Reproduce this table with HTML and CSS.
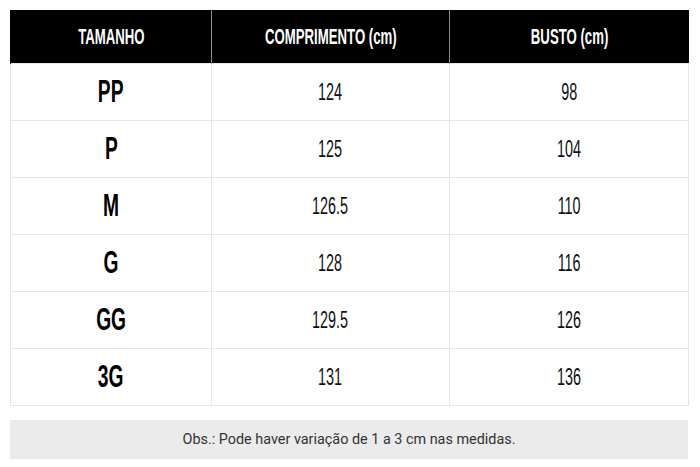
FILE: index.html
```html
<!DOCTYPE html>
<html lang="pt-BR">
<head>
<meta charset="utf-8">
<title>Tabela de medidas</title>
<link rel="stylesheet" href="styles.css">
</head>
<body>
<div class="page">
  <table class="sizes">
    <colgroup>
      <col class="c-size">
      <col class="c-len">
      <col class="c-bust">
    </colgroup>
    <thead>
      <tr>
        <th><span class="cond">TAMANHO</span></th>
        <th><span class="cond">COMPRIMENTO (cm)</span></th>
        <th><span class="cond">BUSTO (cm)</span></th>
      </tr>
    </thead>
    <tbody>
      <tr><td class="size"><span class="cond">PP</span></td><td><span class="cond">124</span></td><td><span class="cond">98</span></td></tr>
      <tr><td class="size"><span class="cond">P</span></td><td><span class="cond">125</span></td><td><span class="cond">104</span></td></tr>
      <tr><td class="size"><span class="cond">M</span></td><td><span class="cond">126.5</span></td><td><span class="cond">110</span></td></tr>
      <tr><td class="size"><span class="cond">G</span></td><td><span class="cond">128</span></td><td><span class="cond">116</span></td></tr>
      <tr><td class="size"><span class="cond">GG</span></td><td><span class="cond">129.5</span></td><td><span class="cond">126</span></td></tr>
      <tr><td class="size"><span class="cond">3G</span></td><td><span class="cond">131</span></td><td><span class="cond">136</span></td></tr>
    </tbody>
  </table>
  <p class="note">Obs.: Pode haver variação de 1 a 3 cm nas medidas.</p>
</div>
</body>
</html>
```

FILE: styles.css
```css
html, body {
  margin: 0;
  padding: 0;
  background: #ffffff;
}

.page {
  padding: 10px 12px 0 10px;
  display: flex;
  flex-direction: column;
  gap: 14px;
}

.sizes {
  width: 678px;
  border-collapse: collapse;
  table-layout: fixed;
  font-family: "Liberation Sans", Arial, sans-serif;
  color: #111;
}

.c-size { width: 201px; }
.c-len { width: 238px; }
.c-bust { width: 239px; }

.sizes th {
  background: #000;
  color: #fff;
  height: 53px;
  padding: 0;
  font-weight: 700;
  font-size: 22px;
  text-align: center;
  vertical-align: middle;
  border-left: 1px solid #8a8a8a;
}

.sizes th:first-child {
  border-left: 1px solid #000;
}

.sizes td {
  height: 56px;
  padding: 0;
  text-align: center;
  vertical-align: middle;
  border: 1px solid #e6e6e6;
  font-size: 24px;
  font-weight: 400;
}

.sizes td.size {
  font-size: 31px;
  font-weight: 700;
  color: #000;
}

.cond {
  display: inline-block;
  transform: scaleX(0.6);
  white-space: nowrap;
}

.sizes td .cond {
  transform: scaleX(0.6);
}

.sizes td.size .cond {
  transform: scaleX(0.62);
}

.note {
  margin: 0;
  width: 678px;
  height: 39px;
  background: #ebebeb;
  display: flex;
  align-items: center;
  justify-content: center;
  font-family: Roboto, "Liberation Sans", sans-serif;
  font-size: 14.4px;
  color: #333;
}
```
